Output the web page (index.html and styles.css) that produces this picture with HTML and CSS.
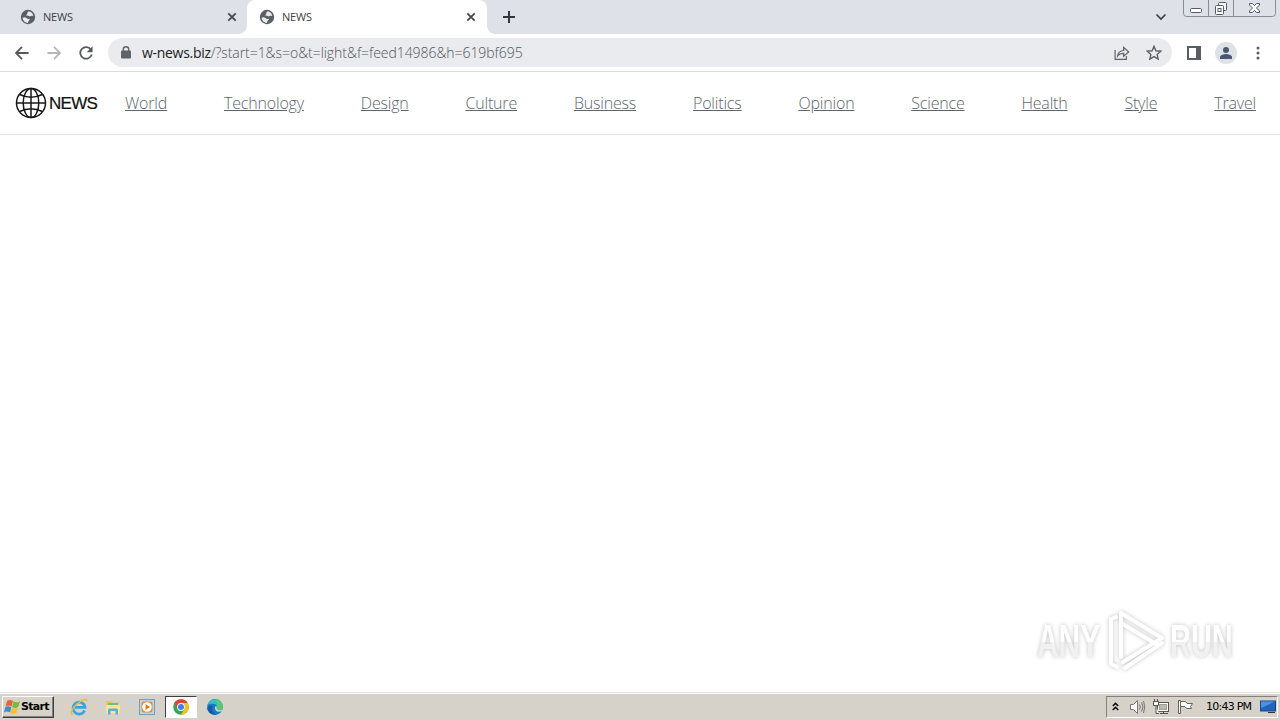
FILE: index.html
```
<!DOCTYPE html>
<html lang="en">
<head>
    <meta charset="UTF-8">
    <meta name="viewport" content="width=device-width, initial-scale=1.0">
    <title>NEWS</title>
    <link rel="stylesheet" href="styles.css">
</head>
<body>
    <!-- Shared icons -->
    <svg class="defs" width="0" height="0">
        <symbol id="globe" viewBox="0 0 16 16">
            <circle cx="8" cy="8" r="7.200" fill="#5b5e63"/>
            <path d="M2.500 8.800q2.600-1.300 4 .2 1.200 1.600 3.200.8.600 1-.8 1.700-.8 1-1 2.500-4.500-.5-5.400-5.200zM8.800 2.300L7.300 3.600 7.400 5 5.800 6.200l2.500.6 1.500.8 1.400-.9 1.900.3q0-3.400-4.300-4.700z" fill="#e9eaee"/>
        </symbol>
        <symbol id="close" viewBox="0 0 10 10">
            <path d="M1.300 1.300l7.400 7.400M8.700 1.300L1.300 8.700" fill="none" stroke="currentColor" stroke-width="1.800"/>
        </symbol>
    </svg>

    <!-- Tab strip -->
    <div class="tabs">
        <div class="tab">
            <svg class="favicon"><use href="#globe"/></svg>
            <span>NEWS</span>
            <svg class="close"><use href="#close"/></svg>
        </div>
        <div class="tab active">
            <svg class="favicon"><use href="#globe"/></svg>
            <span>NEWS</span>
            <svg class="close"><use href="#close"/></svg>
        </div>
        <svg class="new-tab" width="12" height="12" viewBox="0 0 12 12"><path d="M6 0v12M0 6h12" stroke="#303443" stroke-width="2"/></svg>
        <svg class="tab-search" width="12" height="8" viewBox="0 0 12 8"><path d="M1.500 1.500L6 6l4.500-4.500" fill="none" stroke="#3c4043" stroke-width="1.700"/></svg>
        <svg class="window-btns" width="94" height="18" viewBox="0 0 94 18" fill="none">
            <path d="M.5 0v13.500q0 3 3 3h86q3 0 3-3V0M25.500 0v16M50.500 0v16" stroke="#888c97"/>
            <g stroke="#555a66">
                <rect x="7.500" y="8.500" width="11" height="4" rx="1" fill="#fff"/>
                <rect x="35.500" y="2.500" width="8" height="8" rx="1" fill="#f5f6f8"/>
                <rect x="32.500" y="5.500" width="8" height="9" rx="1" fill="#fff"/>
                <rect x="35" y="8.500" width="3" height="3"/>
                <path fill="#fff" d="M66.500 3.500h3l2 2.200 2-2.200h3v1.500l-3 3 3 3v1.500h-3l-2-2.200-2 2.200h-3V11l3-3-3-3z"/>
            </g>
        </svg>
    </div>

    <!-- Toolbar -->
    <div class="toolbar">
        <svg class="nav-icon" viewBox="0 0 16 16"><path d="M15 8H2M8 1.500L1.500 8 8 14.500"/></svg>
        <svg class="nav-icon disabled" viewBox="0 0 16 16"><path d="M1 8h13M8 1.500L14.500 8 8 14.500"/></svg>
        <svg class="nav-icon" viewBox="0 0 16 16"><path d="M13.200 4.300A6.200 6.200 0 1 0 14.100 9.500"/><path class="solid" d="M15 .8v6.400H8.700z"/></svg>
        <div class="address">
            <svg class="lock" width="10" height="13" viewBox="0 0 10 13"><rect y="4.500" width="10" height="8" rx="1" fill="#5f6368"/><path d="M2.300 5V3.300a2.700 2.500 0 0 1 5.400 0V5" fill="none" stroke="#5f6368" stroke-width="1.400"/></svg>
            <span class="url"><b>w-news.biz</b>/?start=1&amp;s=o&amp;t=light&amp;f=feed14986&amp;h=619bf695</span>
            <svg class="share" width="16" height="14" viewBox="0 0 16 14" fill="none" stroke="#5f6368" stroke-width="1.200"><path d="M1.100 4v9.300h11.300V10M3.600 10c.5-3.500 2.700-5.300 6-5.500V1.300L14.700 6 9.600 10.300V7.400C6.900 7.300 5 8.200 3.600 10z"/></svg>
            <svg class="star" width="16" height="15" viewBox="0 0 16 15"><path d="M8 1.300l1.900 4.500 4.900.4-3.700 3.200 1.100 4.800L8 11.600l-4.200 2.600 1.100-4.800L1.200 6.200l4.900-.4z" fill="none" stroke="#5f6368" stroke-width="1.400"/></svg>
        </div>
        <svg class="side-panel" width="14" height="14" viewBox="0 0 14 14"><path d="M0 0h14v14H0zM2 2v10h7V2z" fill="#5a5d63" fill-rule="evenodd"/></svg>
        <svg class="avatar" width="22" height="22" viewBox="0 0 22 22"><circle cx="11" cy="11" r="11" fill="#dee1e6"/><circle cx="11" cy="8" r="3" fill="#4c5671"/><path d="M5 17v-2c0-2 4-3 6-3s6 1 6 3v2z" fill="#4c5671"/></svg>
        <svg class="menu" width="4" height="14" viewBox="0 0 4 14" fill="#5a5d63"><circle cx="2" cy="2" r="1.500"/><circle cx="2" cy="7" r="1.500"/><circle cx="2" cy="12" r="1.500"/></svg>
    </div>

    <!-- Site header -->
    <header class="site-header">
        <a class="logo">
            <svg width="32" height="32" viewBox="0 0 32 32" fill="none" stroke="#181818" stroke-width="1.500">
                <circle cx="16" cy="16" r="14.500"/>
                <ellipse cx="16" cy="16" rx="7.800" ry="14.500"/>
                <path d="M16 1.500v29M1.500 16h29M4.600 7.500q11.400 5.500 22.800 0M4.600 24.500q11.400-5.500 22.800 0"/>
            </svg>
            <span>NEWS</span>
        </a>
        <nav class="site-nav">
            <a href="#">World</a>
            <a href="#">Technology</a>
            <a href="#">Design</a>
            <a href="#">Culture</a>
            <a href="#">Business</a>
            <a href="#">Politics</a>
            <a href="#">Opinion</a>
            <a href="#">Science</a>
            <a href="#">Health</a>
            <a href="#">Style</a>
            <a href="#">Travel</a>
        </nav>
    </header>

    <main class="content">
        <div class="watermark">
            <span class="any">ANY</span>
            <svg width="60" height="64" viewBox="0 0 60 64" fill="none" stroke="#fff" stroke-width="4" stroke-linejoin="round" stroke-linecap="round">
                <path d="M9 8L4 10v45l6 3M14 46V4l41 25-39 24M14 14l35 21M14 24v24M55 34L18 59"/>
            </svg>
            <span class="run">RUN</span>
        </div>
    </main>

    <!-- Taskbar -->
    <footer class="taskbar">
        <button class="start">
            <svg width="17" height="16" viewBox="0 0 17 16">
                <path d="M3 2q3-2 6 0L7.500 7.500q-3-2-6 0z" fill="#e8642c"/>
                <path d="M9.500 2.300q3 1.800 6.500 0L14.200 8q-3 1.800-6 0z" fill="#76b943"/>
                <path d="M1.300 8.200q3-2 6 0L6 13.500q-3-2-6 0z" fill="#4389d0"/>
                <path d="M7.800 8.700q3 1.800 6.200 0L12.500 14q-3 1.800-6 0z" fill="#f6c22c"/>
            </svg>
            <span>Start</span>
        </button>
        <div class="task">
            <svg width="18" height="18" viewBox="0 0 18 18" fill="none">
                <path d="M14.600 12.500A6 6 0 1 1 15 9.300H5" stroke="#39a5de" stroke-width="2.700"/>
                <path d="M3 16C-1 17 2 10 7 6s11-7 9.500-2.500" stroke="#e9bd3c" stroke-width="1.500"/>
            </svg>
        </div>
        <div class="task">
            <svg width="16" height="16" viewBox="0 0 16 16">
                <path d="M1 2h5l1 1.500h7V14H1z" fill="#e5c463"/>
                <path d="M3 4h10v4H3z" fill="#79b979"/>
                <path d="M1 6h14v8.500H1z" fill="#f7e59b"/>
                <path d="M3 15.500V11q0-1.500 1.500-1.500h7Q13 9.500 13 11v4.500h-2.500V12h-5v3.500z" fill="#62acd8"/>
            </svg>
        </div>
        <div class="task">
            <svg width="16" height="16" viewBox="0 0 16 16">
                <rect x=".5" y=".5" width="15" height="15" fill="#b8d7ee" stroke="#6b9fca"/>
                <rect x="2.500" y="2.500" width="11" height="11" rx="2" fill="#f38a1d"/>
                <circle cx="8" cy="8" r="4.800" fill="#fff"/>
                <path d="M6.500 5l4.500 3-4.500 3z" fill="#e87512"/>
            </svg>
        </div>
        <div class="task pressed">
            <svg width="16" height="16" viewBox="0 0 16 16">
                <circle cx="8" cy="8" r="7.800" fill="#36a554"/>
                <path d="M1.250 4.100A7.800 7.800 0 0 1 14.750 4.100H8A3.900 3.900 0 0 0 4.600 9.950z" fill="#e64134"/>
                <path d="M14.750 4.100A7.800 7.800 0 0 1 8 15.800L11.400 9.950A3.900 3.900 0 0 0 8 4.100z" fill="#fbc116"/>
                <circle cx="8" cy="8" r="3.900" fill="#fff"/>
                <circle cx="8" cy="8" r="3" fill="#3f7fe8"/>
            </svg>
        </div>
        <div class="task">
            <svg width="16" height="16" viewBox="0 0 16 16">
                <circle cx="8" cy="8" r="7.900" fill="#1679cb"/>
                <path d="M.5 6A7.900 7.900 0 0 1 15.900 8q0 3-4 3.200-3 0-2.500-1.500 2-5-4-5Q2 4.700.5 6z" fill="#35bfc0"/>
                <path d="M8 .1A7.900 7.900 0 0 1 15.900 8q0 3-4 3.200-3 0-2.500-1.500Q12 4 8 .1z" fill="#55c96d"/>
                <path d="M8 8q-.5 4.500 4 4.800 2 0 3.200-1l.8-1.600q-2 1.300-4.400.9-2.200-.5-2.100-1.800.4-1.200 0-2.300Q8.200 7 8 8z" fill="#d5d2ca"/>
                <path d="M5.800 7Q3 13 10 15.600 2 16.500.3 10 1 5.500 5.800 7z" fill="#145ca9"/>
            </svg>
        </div>
        <div class="tray">
            <svg width="7" height="9" viewBox="0 0 7 9"><path d="M.8 4l2.700-2.700L6.200 4M.8 8l2.700-2.700L6.200 8" fill="none" stroke="#000" stroke-width="1.400"/></svg>
            <svg class="sound" width="17" height="16" viewBox="0 0 17 16" fill="none" stroke="#77756f"><path d="M1.500 5.500h3l4-4v13l-4-4h-3z" fill="#fff"/><path d="M10.500 5.500q1.500 2.500 0 5M12.500 3.500q3 4.500 0 9M14.500 2q2.500 6 0 12"/></svg>
            <svg class="network" width="17" height="16" viewBox="0 0 17 16" stroke="#55534e"><rect x="4.500" y="3.500" width="11" height="9" fill="#fff"/><rect x="6.500" y="5.500" width="7" height="5" fill="#bbb9b2" stroke="#a09e97"/><path d="M7 14.500h8M10.500 12v2" fill="none"/><path d="M.5 2.500h5v4h-5zM1.500 0v2M4.500 0v2M3 7v7.500h3" fill="#fff"/></svg>
            <svg class="flag" width="17" height="16" viewBox="0 0 17 16" stroke="#66645e"><path d="M1.500 1.500h2v13h-2z" fill="#fff"/><path d="M3.500 2.500h5l1.500 2h5.500l-2 3 1 2h-5l-1.500-2H3.500z" fill="#fff"/></svg>
            <span class="clock">10:43 PM</span>
            <svg class="desktop" width="16" height="14" viewBox="0 0 16 14"><rect x=".5" y="1" width="15" height="10" fill="#2264bd" stroke="#174986"/><path d="M1 1.500h14L1 8z" fill="#4c92dc"/><path d="M8 12.500h7" stroke="#333"/></svg>
        </div>
    </footer>
</body>
</html>
```
FILE: styles.css
```
/* General */
* { margin: 0; padding: 0; box-sizing: border-box; }
body {
    width: 1280px;
    height: 720px;
    display: flex;
    flex-direction: column;
    font-family: "Open Sans", "Noto Sans", sans-serif;
    background: #fff;
    overflow: hidden;
}
svg { display: block; flex: none; }
.defs { position: absolute; }

/* Tab strip */
.tabs {
    height: 34px;
    display: flex;
    align-items: center;
    background: #dee1e8;
    padding-left: 8px;
}
.tab {
    width: 239px;
    height: 34px;
    display: flex;
    align-items: center;
    padding: 0 10px 0 12px;
    font-size: 11px;
    letter-spacing: -0.2px;
    color: #3c4043;
}
.tab.active {
    width: 240px;
    position: relative;
    padding-right: 11px;
    background: #fff;
    border-radius: 8px 8px 0 0;
}
.tab.active::before,
.tab.active::after {
    content: "";
    position: absolute;
    bottom: 0;
    width: 8px;
    height: 8px;
}
.tab.active::before {
    left: -8px;
    background: radial-gradient(circle at 0 0, transparent 7.5px, #fff 8px);
}
.tab.active::after {
    right: -8px;
    background: radial-gradient(circle at 100% 0, transparent 7.5px, #fff 8px);
}
.favicon { width: 16px; height: 16px; }
.tab span { margin: -2px 0 0 7px; }
.close { width: 10px; height: 10px; margin-left: auto; color: #45484e; }
.new-tab { margin-left: 16px; }
.tab-search { margin-left: auto; }
.window-btns { align-self: flex-start; margin: 0 3px 0 16px; }

/* Toolbar */
.toolbar {
    height: 38px;
    display: flex;
    align-items: center;
    padding: 0 20px 0 14px;
    border-bottom: 1px solid #d9dbde;
}
.nav-icon {
    width: 16px;
    height: 16px;
    margin-right: 16px;
    padding: 0.5px;
    fill: none;
    stroke: #55585d;
    stroke-width: 1.9;
}
.nav-icon.disabled { stroke: #b4b6b9; }
.nav-icon .solid { fill: #55585d; stroke: none; }
.address {
    width: 1064px;
    height: 29px;
    display: flex;
    align-items: center;
    margin-left: -2px;
    padding: 0 10px 0 13px;
    background: #e9ebee;
    border-radius: 15px;
}
.url {
    margin-left: 11px;
    font-size: 14px;
    font-weight: 300;
    letter-spacing: -0.05px;
    color: #50555b;
    white-space: nowrap;
}
.url b {
    font-weight: 400;
    letter-spacing: -0.3px;
    color: #202124;
}
.share { margin-left: auto; }
.star { margin-left: 16px; }
.side-panel { margin-left: 15px; }
.avatar { margin-left: 14px; }
.menu { margin-left: auto; }

/* Site header */
.site-header {
    height: 63px;
    display: flex;
    align-items: center;
    padding: 0 24px 0 15px;
    border-bottom: 1px solid #dee2e6;
}
.logo {
    width: 110px;
    display: flex;
    align-items: center;
    font: 17px "Liberation Sans", Arial, sans-serif;
    color: #111;
}
.logo span {
    margin: 1px 0 0 2px;
    -webkit-text-stroke: 0.2px #111;
    letter-spacing: -0.7px;
}
.site-nav {
    flex: 1;
    display: flex;
    justify-content: space-between;
}
.site-nav a {
    font-size: 16px;
    font-weight: 300;
    letter-spacing: -0.18px;
    color: #5d666e;
    text-decoration: underline;
}

/* Page body */
.content {
    flex: 1;
    display: flex;
    align-items: flex-end;
    justify-content: flex-end;
    padding: 0 46px 19px 0;
}
.watermark {
    display: flex;
    align-items: center;
    filter: drop-shadow(0 0 2px rgba(0, 0, 0, 0.24));
}
.watermark span {
    width: 64px;
    font: bold 46px/60px "Liberation Sans", Arial, sans-serif;
}
.watermark .any,
.watermark .run {
    width: 100px;
    background: linear-gradient(#fff 52%, #f1f1f1 52%);
    -webkit-background-clip: text;
    background-clip: text;
    color: transparent;
    transform-origin: left;
}
.watermark .any { transform: scaleX(0.65); margin-right: -36px; }
.watermark .run { transform: scaleX(0.63); margin-right: -36px; }
.watermark svg { margin: 0 3px 0 6px; }

/* Taskbar */
.taskbar {
    height: 28px;
    display: flex;
    align-items: center;
    padding: 1px 2px 1px;
    background: #d6d2ca;
    border-top: 1px solid #e4e1dc;
    box-shadow: inset 0 1px #fff;
}
.start {
    width: 52px;
    height: 22px;
    display: flex;
    align-items: center;
    margin-right: 9px;
    padding-left: 1px;
    background: #d6d2ca;
    border: 1px solid;
    border-color: #fff #404040 #404040 #fff;
    box-shadow: inset -1px -1px #85817a;
    font: bold 11px "DejaVu Sans", sans-serif;
    letter-spacing: -0.7px;
    color: #000;
}
.task {
    width: 32px;
    height: 22px;
    display: flex;
    align-items: center;
    justify-content: center;
    margin-right: 2px;
}
.task.pressed {
    background: #fff;
    border: 1px solid;
    border-color: #404040 #fff #fff #404040;
}
.tray {
    width: 172px;
    height: 22px;
    display: flex;
    align-items: center;
    margin-left: auto;
    padding-left: 5px;
    border: 1px solid;
    border-color: #85817a #fff #fff #85817a;
}
.sound { margin-left: 10px; }
.network { margin-left: 7px; }
.flag { margin-left: 7px; }
.clock {
    width: 46px;
    margin-left: 12px;
    font: 11px "DejaVu Sans", sans-serif;
    letter-spacing: -0.75px;
    white-space: nowrap;
    color: #000;
}
.desktop { margin-left: 8px; }
```
